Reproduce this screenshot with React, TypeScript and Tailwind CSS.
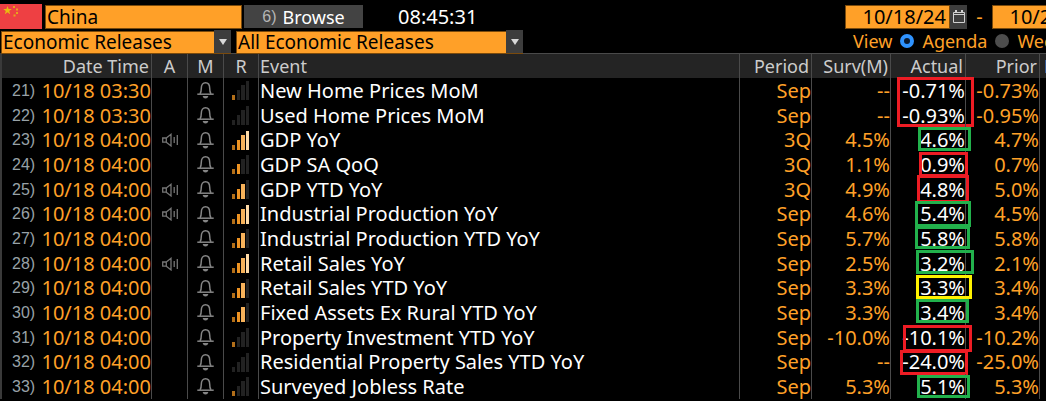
import { useState } from 'react';

type Release = {
  id: number;
  time: string;
  audio?: boolean;
  relevance: number;
  event: string;
  period: string;
  survey: string;
  actual: string;
  prior: string;
  mark?: string;
};

const releases: Release[] = [
  { id: 21, time: '10/18 03:30', relevance: 1, event: 'New Home Prices MoM', period: 'Sep', survey: '--', actual: '-0.71%', prior: '-0.73%', mark: '-top-px -right-[9px] h-[50px] w-[77px] border-[#ed1c24]' },
  { id: 22, time: '10/18 03:30', relevance: 0, event: 'Used Home Prices MoM', period: 'Sep', survey: '--', actual: '-0.93%', prior: '-0.95%' },
  { id: 23, time: '10/18 04:00', audio: true, relevance: 4, event: 'GDP YoY', period: '3Q', survey: '4.5%', actual: '4.6%', prior: '4.7%', mark: '-top-px -right-1.5 h-6 w-[53px] border-[#22b14c]' },
  { id: 24, time: '10/18 04:00', relevance: 2, event: 'GDP SA QoQ', period: '3Q', survey: '1.1%', actual: '0.9%', prior: '0.7%', mark: 'top-0 -right-[3px] h-[25px] w-[49px] border-[#ed1c24]' },
  { id: 25, time: '10/18 04:00', audio: true, relevance: 3, event: 'GDP YTD YoY', period: '3Q', survey: '4.9%', actual: '4.8%', prior: '5.0%', mark: '-top-0.5 -right-1 h-7 w-[52px] border-[#ed1c24]' },
  { id: 26, time: '10/18 04:00', audio: true, relevance: 4, event: 'Industrial Production YoY', period: 'Sep', survey: '4.6%', actual: '5.4%', prior: '4.5%', mark: '-top-px -right-1.5 h-[26px] w-14 border-[#22b14c]' },
  { id: 27, time: '10/18 04:00', relevance: 3, event: 'Industrial Production YTD YoY', period: 'Sep', survey: '5.7%', actual: '5.8%', prior: '5.8%', mark: 'top-0 -right-[5px] h-[23px] w-[55px] border-[#22b14c]' },
  { id: 28, time: '10/18 04:00', audio: true, relevance: 4, event: 'Retail Sales YoY', period: 'Sep', survey: '2.5%', actual: '3.2%', prior: '2.1%', mark: '-top-px -right-[9px] h-6 w-[58px] border-[#22b14c]' },
  { id: 29, time: '10/18 04:00', relevance: 3, event: 'Retail Sales YTD YoY', period: 'Sep', survey: '3.3%', actual: '3.3%', prior: '3.4%', mark: '-top-px -right-[7px] h-6 w-14 border-[#fff200]' },
  { id: 30, time: '10/18 04:00', relevance: 3, event: 'Fixed Assets Ex Rural YTD YoY', period: 'Sep', survey: '3.3%', actual: '3.4%', prior: '3.4%', mark: '-top-px -right-1 h-6 w-[53px] border-[#22b14c]' },
  { id: 31, time: '10/18 04:00', relevance: 1, event: 'Property Investment YTD YoY', period: 'Sep', survey: '-10.0%', actual: '-10.1%', prior: '-10.2%', mark: 'top-0 -right-[7px] h-[27px] w-[69px] border-[#ed1c24]' },
  { id: 32, time: '10/18 04:00', relevance: 0, event: 'Residential Property Sales YTD YoY', period: 'Sep', survey: '--', actual: '-24.0%', prior: '-25.0%', mark: 'top-0 -right-[3px] h-[25px] w-[68px] border-[#ed1c24]' },
  { id: 33, time: '10/18 04:00', relevance: 1, event: 'Surveyed Jobless Rate', period: 'Sep', survey: '5.3%', actual: '5.1%', prior: '5.3%', mark: 'top-px -right-[5px] h-[23px] w-[53px] border-[#22b14c]' },
];

const ChinaFlag = () => (
  <svg viewBox="0 0 42 25" className="mr-[3px] h-[25px] w-[42px] shrink-0" role="img" aria-label="China">
    <rect width="42" height="25" fill="#ee4043" />
    <path d="M7.500 2l1.100 3h3.200L9.200 7l1 3.200-2.700-2-2.700 2 1-3.200L3.200 5h3.200z" fill="#e8bd10" />
    <path d="M13 2h2v2h-2zM16 4.500h2v2h-2zM16 8h2v2h-2zM13.500 10.500h2v2h-2z" fill="#e8a41c" />
  </svg>
);

const Bell = () => (
  <svg viewBox="0 0 17 17" className="mx-auto h-[17px] w-[17px]" fill="none" stroke="#858585" strokeWidth="1.500">
    <path d="M.3 12.200h16.400" />
    <path d="M3 12c1.300-1.700 1.300-3.500 1.300-5.700C4.300 2.500 6 .8 8.500.8s4.200 1.700 4.200 5.500c0 2.200 0 4 1.300 5.700" />
    <path d="M5.600 14h5.800c-.5 1.700-1.500 2.500-2.900 2.500S6.100 15.700 5.600 14z" fill="#858585" stroke="none" />
  </svg>
);

const Speaker = () => (
  <svg viewBox="0 0 16 14" className="mx-auto h-3.5 w-4" fill="none" stroke="#757575" strokeWidth="1.300">
    <path d="M.7 5h3.600v4.200H.7zM4.300 5L9 1.300v11.600L4.300 9.200" />
    <path d="M12.200 4v6M15.300 2v10" />
  </svg>
);

const litColors = ['#b36f19', '#ee9322', '#f7b25a', '#ffdba8'];

const Relevance = ({ level }: { level: number }) => (
  <svg viewBox="0 0 18 19" className="mx-auto h-[19px] w-[18px]" shapeRendering="crispEdges">
    {[5, 10, 15, 19].map((h, i) => (
      <rect key={h} x={[0, 5, 9, 14][i]} y={19 - h} width={i === 2 ? 4 : 3} height={h} fill={i < level ? litColors[i] : '#222222'} />
    ))}
  </svg>
);

const Calendar = () => (
  <svg viewBox="0 0 12 13" className="h-[13px] w-3" fill="none" stroke="#d0d0d0">
    <path d="M.5 2.500h11v10H.5zM.5 4.500h11" />
    <path d="M3 0v3M9 0v3" strokeWidth="2" />
  </svg>
);

const DateField = ({ label, value }: { label: string; value: string }) => (
  <div className="flex h-6 shrink-0">
    <input
      aria-label={label}
      defaultValue={value}
      className="w-[105px] border border-[#7a4a0c] bg-[#ffa028] pr-[3px] text-right text-black outline-none"
    />
    <button aria-label={`Pick ${label}`} className="flex w-[17px] items-center justify-center bg-[#3d3d3d]">
      <Calendar />
    </button>
  </div>
);

const Picker = ({ label, option, className }: { label: string; option: string; className: string }) => (
  <div className={`relative h-[23px] shrink-0 text-[19px] ${className}`}>
    <select
      aria-label={label}
      className="h-full w-full appearance-none border border-[#7a4a0c] bg-[#ffa028] pr-5 pl-px leading-5 text-black outline-none"
    >
      <option>{option}</option>
    </select>
    <span className="pointer-events-none absolute inset-y-0 right-0 flex w-[17px] items-center justify-center bg-[#3d3d3d]">
      <svg viewBox="0 0 8 6" className="h-1.5 w-2" fill="#d8d8d8">
        <path d="M0 0h8L4 6z" />
      </svg>
    </span>
  </div>
);

const radioClass =
  'h-3.5 w-3.5 shrink-0 appearance-none rounded-full bg-[#4d4d4d] checked:border-4 checked:border-[#2f93ff] checked:bg-[#0a1a30]';

const cell = 'border-r border-[#4a4a4a] p-0';

export default function App() {
  const [view, setView] = useState('Agenda');

  return (
    <div className="min-h-screen overflow-hidden bg-black font-['Noto_Sans','Open_Sans',sans-serif] text-[20px] leading-6 whitespace-nowrap text-[#ffa028]">
      {/* The panel runs on past the right edge of the window */}
      <div className="w-[calc(100%+80px)]">
        <header className="flex justify-between pt-1">
          <div>
            <div className="flex h-[25px] items-center">
              <ChinaFlag />
              <input
                aria-label="Country"
                defaultValue="China"
                className="h-6 w-[197px] border border-[#7a4a0c] bg-[#ffa028] pl-px text-[19px] text-black outline-none"
              />
              <button className="ml-0.5 flex h-[23px] w-[119px] items-center justify-center gap-1.5 bg-[#434343] text-[18px] text-white">
                <span className="font-['Liberation_Sans',sans-serif] text-[16px] text-[#b5b5b5]">6)</span>
                Browse
              </button>
              <time className="ml-[35px] text-white">08:45:31</time>
            </div>
            <div className="flex gap-[5px] pt-px pl-px">
              <Picker label="Release type" option="Economic Releases" className="w-[230px]" />
              <Picker label="Release filter" option="All Economic Releases" className="w-[287px]" />
            </div>
          </div>
          <div className="w-[281px]">
            <div className="flex h-[25px] items-center">
              <DateField label="start date" value="10/18/24" />
              <span className="w-[25px] text-center">-</span>
              <DateField label="end date" value="10/25/24" />
            </div>
            <fieldset className="flex items-center pl-2 text-[18px]">
              <span className="mr-2">View</span>
              {['Agenda', 'Weekly'].map((name) => (
                <label key={name} className="mr-2 flex items-center gap-2">
                  <input type="radio" name="view" checked={view === name} onChange={() => setView(name)} className={radioClass} />
                  {name}
                </label>
              ))}
            </fieldset>
          </div>
        </header>

        <table className="w-full table-fixed border-separate border-spacing-0 border-l-2 border-[#3a3a3a]">
          <colgroup>
            <col className="w-[150px]" />
            <col className="w-9" />
            <col className="w-9" />
            <col className="w-[35px]" />
            <col />
            <col className="w-[72px]" />
            <col className="w-[79px]" />
            <col className="w-[75px]" />
            <col className="w-[74px]" />
            <col className="w-[86px]" />
          </colgroup>
          <thead>
            <tr className="h-[25px] bg-[#242424] text-[18px] leading-[23px] text-[#cccccc] *:border-t *:border-r *:border-[#4a4a4a] *:p-0 *:font-normal">
              <th className="text-right"><span className="pr-0.5">Date Time</span></th>
              <th>A</th>
              <th>M</th>
              <th>R</th>
              <th className="text-left"><span className="pl-px">Event</span></th>
              <th className="text-right"><span className="pr-0.5">Period</span></th>
              <th className="text-right"><span className="pr-0.5">Surv(M)</span></th>
              <th className="text-right"><span className="pr-0.5">Actual</span></th>
              <th className="text-right"><span className="pr-0.5">Prior</span></th>
              <th className="text-left"><span className="pl-1">Revised</span></th>
            </tr>
          </thead>
          <tbody>
            {releases.map((r) => (
              <tr key={r.id} className="h-[25px] nth-[3n]:h-6">
                <td className={cell}>
                  <div className="flex items-center justify-between pl-2.5">
                    <span className="font-['Liberation_Sans',sans-serif] text-[16px] text-[#98a2a8]">{r.id})</span>
                    <span>{r.time}</span>
                  </div>
                </td>
                <td className={cell}>{r.audio && <Speaker />}</td>
                <td className={cell}><Bell /></td>
                <td className={cell}><Relevance level={r.relevance} /></td>
                <td className={`${cell} pl-px text-white`}>{r.event}</td>
                <td className={`${cell} text-right`}>{r.period}</td>
                <td className={`${cell} text-right`}>{r.survey}</td>
                <td className={`${cell} relative text-right text-white`}>
                  {r.actual}
                  {r.mark && <span className={`absolute border-3 ${r.mark}`} />}
                </td>
                <td className={`${cell} text-right`}>{r.prior}</td>
                <td className={cell} />
              </tr>
            ))}
          </tbody>
        </table>
      </div>
    </div>
  );
}
